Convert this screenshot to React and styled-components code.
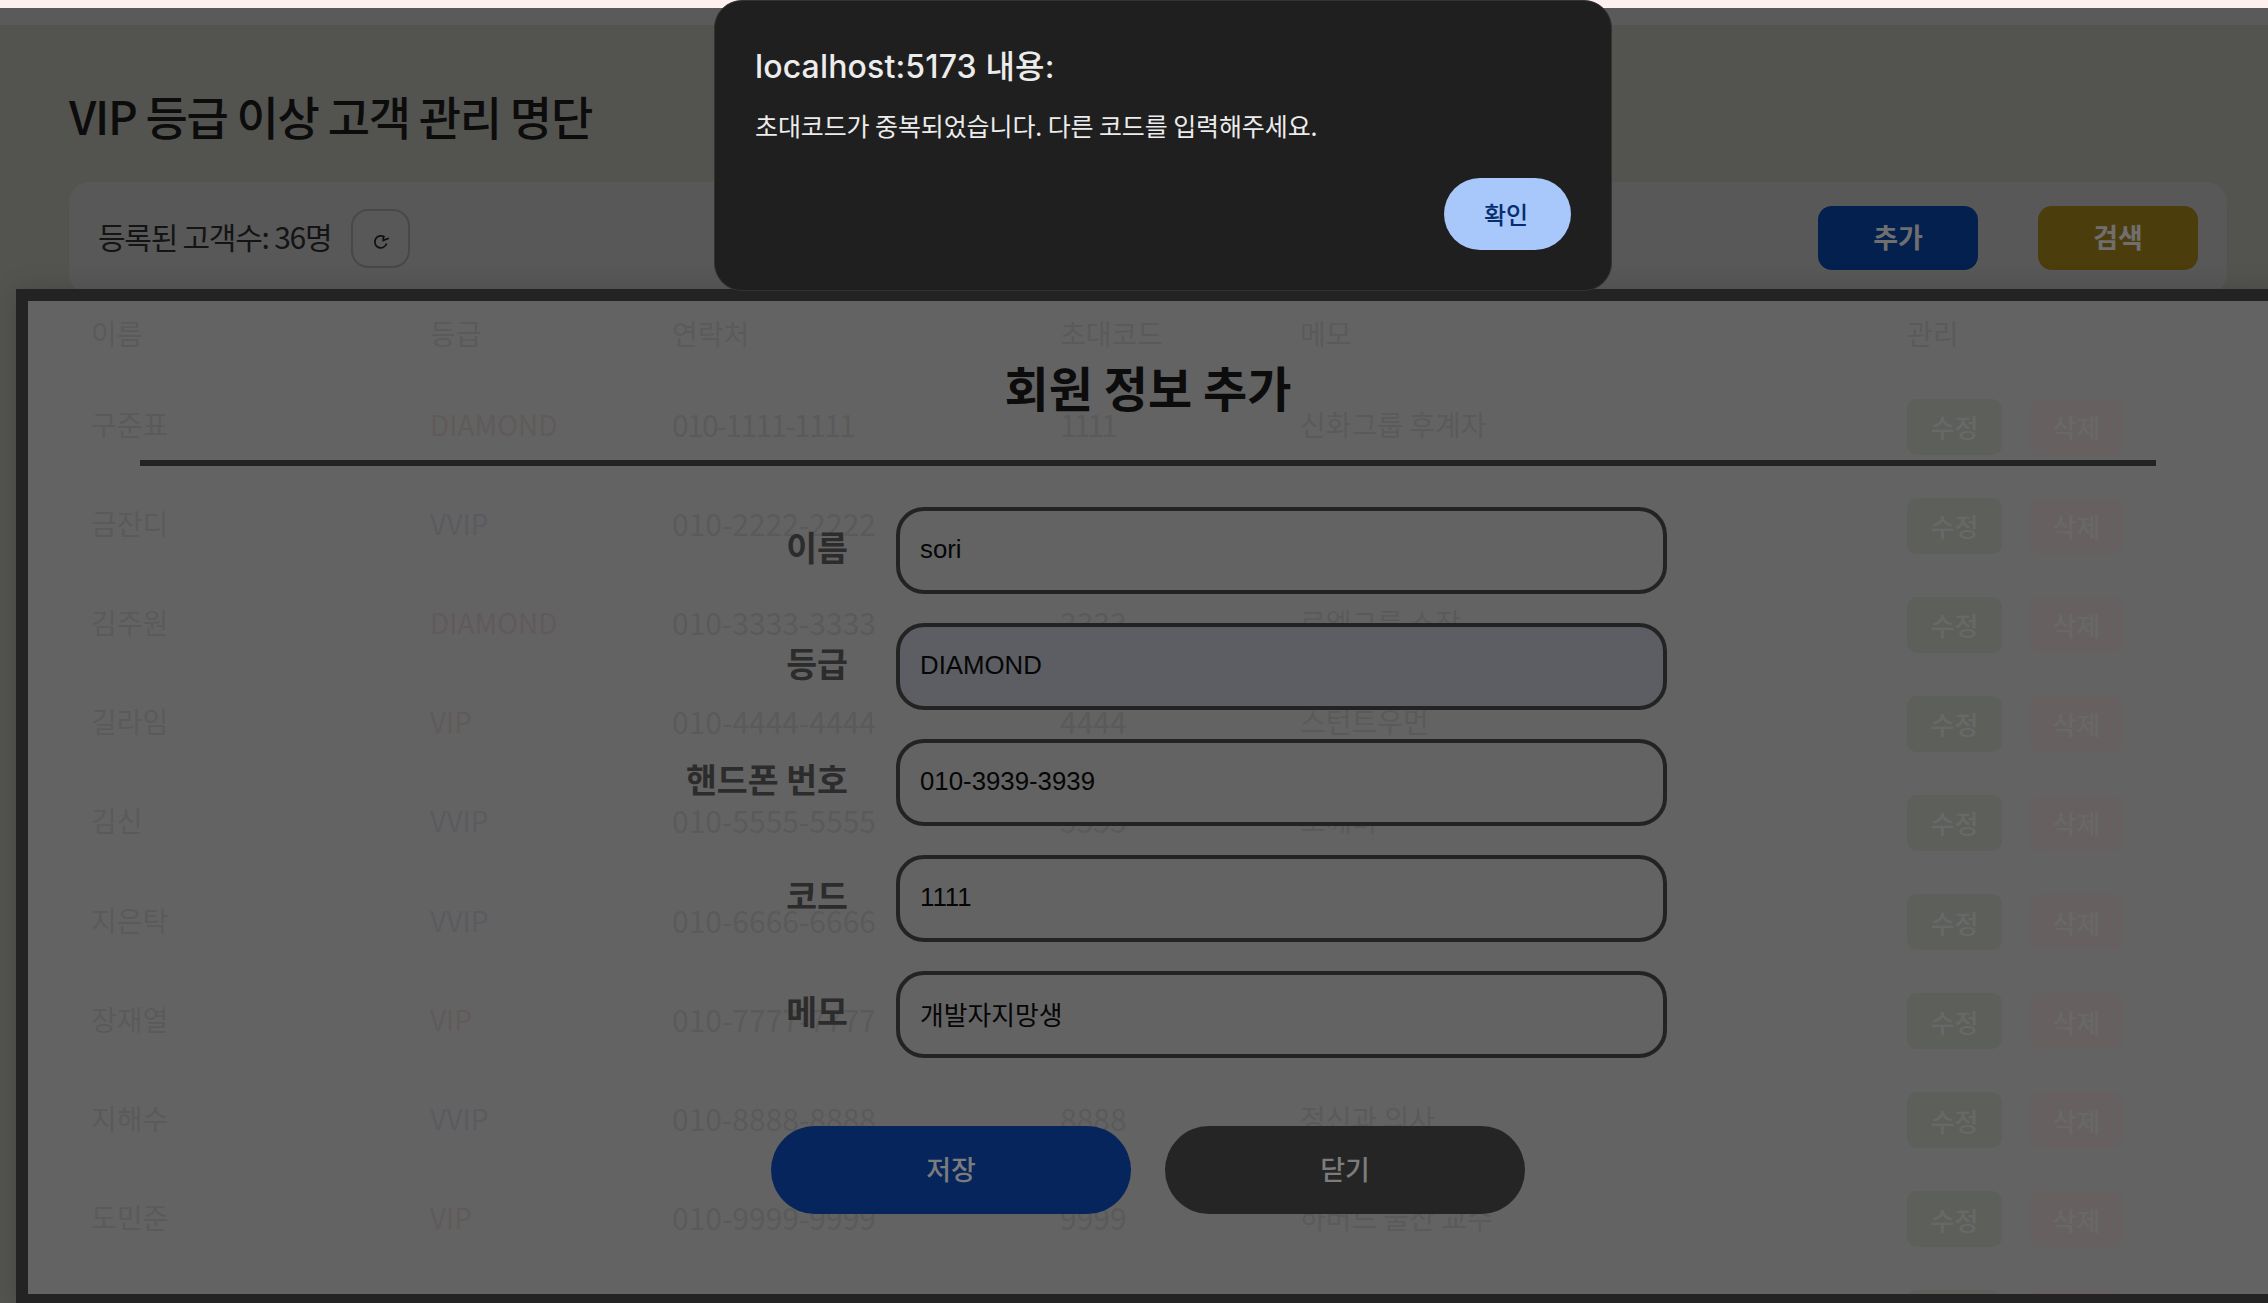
import React from "react";
import styled, { createGlobalStyle } from "styled-components";

const Global = createGlobalStyle`
  html, body { margin: 0; padding: 0; width: 2268px; height: 1303px; overflow: hidden; background: #535350; }
  * { box-sizing: border-box; }
  body { font-family: "Noto Sans CJK KR", "Noto Sans", sans-serif; }
`;

const Screen = styled.div`
  position: relative;
  width: 2268px;
  height: 1303px;
  overflow: hidden;
  background: #535350;
`;
const TopStrip = styled.div`
  height: 8px;
  background: #fff0f0;
`;
const TopBand = styled.div`
  height: 17px;
  background: #5a5a5a;
`;
const Main = styled.main`
  padding: 0 41px 0 69px;
`;
const PageTitle = styled.h1`
  margin: 0;
  height: 157px;
  padding-top: 62px;
  font-size: 46px;
  line-height: 56px;
  font-weight: 500;
  letter-spacing: -1.3px;
  color: #0c0c0c;
`;
const Toolbar = styled.div`
  height: 112px;
  padding: 24px 29px;
  display: flex;
  align-items: flex-start;
  justify-content: space-between;
  background: #585858;
  border-radius: 20px;
`;
const ToolLeft = styled.div`
  display: flex;
  align-items: center;
  gap: 20px;
  height: 64px;
`;
const Count = styled.span`
  margin-top: -5px;
  font-size: 30px;
  letter-spacing: -1.25px;
  color: #141414;
`;
const RefreshButton = styled.button`
  width: 59px;
  height: 59px;
  padding: 8px 0 0;
  display: flex;
  align-items: center;
  justify-content: center;
  background: transparent;
  border: 2px solid #484848;
  border-radius: 17px;
`;
const ToolRight = styled.div`
  display: flex;
  gap: 60px;
`;
const ToolButton = styled.button`
  width: 160px;
  height: 64px;
  padding: 0 0 3px;
  border: 0;
  border-radius: 14px;
  background: ${(p) => p.$bg};
  color: #6f6f6f;
  font: 600 27px "Noto Sans CJK KR", sans-serif;
`;
const Table = styled.div`
  display: grid;
  grid-template-columns: 339px 242px 388px 240px 607px 1fr;
  grid-template-rows: 80.5px;
  grid-auto-rows: 99.1px;
  padding-left: 22px;
`;
const Cell = styled.div`
  display: flex;
  align-items: center;
  font-size: ${(p) => p.$size || 28}px;
  letter-spacing: ${(p) => p.$track || 0}px;
  color: ${(p) => p.$color || "#0a0a0a"};
`;
const HeadCell = styled(Cell)`
  padding-bottom: 2px;
`;
const Actions = styled.div`
  display: flex;
  align-items: center;
  gap: 28px;
  padding-top: 5px;
`;
const ActionButton = styled.button`
  width: ${(p) => p.$w}px;
  height: 56px;
  padding: 0;
  border: 0;
  border-radius: 10px;
  background: ${(p) => p.$bg};
  color: #7e7e7e;
  font: 500 26px "Noto Sans CJK KR", sans-serif;
`;
const Modal = styled.section`
  position: absolute;
  top: 289px;
  left: 16px;
  width: 2264px;
  height: 1017px;
  border: 12px solid #232323;
  background: rgba(101, 101, 101, 0.88);
  box-shadow: 0 0 24px rgba(0, 0, 0, 0.15);
  padding-top: 50px;
`;
const ModalTitle = styled.h2`
  margin: 0;
  height: 109px;
  font-size: 48px;
  line-height: 70px;
  font-weight: 700;
  text-align: center;
  color: #0c0c0c;
`;
const Divider = styled.hr`
  margin: 0 112px;
  height: 6px;
  border: 0;
  background: #232323;
`;
const Form = styled.div`
  margin-top: 41px;
  display: grid;
  grid-template-columns: 219px 771px;
  justify-content: center;
  column-gap: 48px;
  row-gap: 29px;
  align-items: center;
`;
const Label = styled.label`
  margin-top: -9px;
  text-align: right;
  font-size: 33.6px;
  font-weight: 700;
  color: #2c2c2c;
  white-space: nowrap;
`;
const Field = styled.input`
  width: 771px;
  height: 87px;
  padding: 0 20px 3px;
  border: 4px solid #232323;
  border-radius: 28px;
  outline: none;
  background: ${(p) => (p.$select ? "#5c5e63" : "#636363")};
  color: #060606;
  font: 25.8px "Liberation Sans", "Noto Sans CJK KR", sans-serif;
`;
const ModalActions = styled.div`
  margin-top: 68px;
  display: flex;
  justify-content: center;
  gap: 34px;
`;
const PillButton = styled.button`
  width: 360px;
  height: 88px;
  padding: 0 0 4px;
  border: 0;
  border-radius: 44px;
  background: ${(p) => p.$bg};
  color: #7c7c7c;
  font: 500 27px "Noto Sans CJK KR", sans-serif;
`;
const Alert = styled.div`
  position: absolute;
  top: 0;
  left: 714px;
  width: 898px;
  height: 291px;
  padding: 44px 40px 40px 40px;
  display: flex;
  flex-direction: column;
  background: #1f1f1f;
  border: 1px solid #333;
  border-radius: 28px;
`;
const AlertTitle = styled.div`
  font: 500 32px/44px "Inter", "Noto Sans CJK KR", sans-serif;
  letter-spacing: 0.15px;
  color: #ececec;
`;
const AlertBody = styled.div`
  margin-top: 18px;
  font: 400 25px/36px "Noto Sans CJK KR", sans-serif;
  letter-spacing: -0.1px;
  color: #ececec;
`;
const AlertFoot = styled.div`
  margin-top: auto;
  display: flex;
  justify-content: flex-end;
`;
const AlertOk = styled.button`
  width: 127px;
  height: 72px;
  padding: 0 3px 2px 0;
  border: 0;
  border-radius: 36px;
  background: #a8c7fa;
  color: #062e6f;
  font: 500 24px "Noto Sans CJK KR", sans-serif;
`;

const GRADE = { DIAMOND: "#3a0a0a", VVIP: "#0a0a3a", VIP: "#3a0808" };
const rows = [
  ["구준표", "DIAMOND", "010-1111-1111", "1111", "신화그룹 후계자", -1.7, -2.9],
  ["금잔디", "VVIP", "010-2222-2222", "2222", ""],
  ["김주원", "DIAMOND", "010-3333-3333", "3333", "로엘그룹 소장"],
  ["길라임", "VIP", "010-4444-4444", "4444", "스턴트우먼"],
  ["김신", "VVIP", "010-5555-5555", "5555", "도깨비"],
  ["지은탁", "VVIP", "010-6666-6666", "6666", ""],
  ["장재열", "VIP", "010-7777-7777", "7777", ""],
  ["지해수", "VVIP", "010-8888-8888", "8888", "정신과 의사"],
  ["도민준", "VIP", "010-9999-9999", "9999", "하버드 물산 교수"],
];
const fields = [
  ["이름", "sori"],
  ["등급", "DIAMOND", true],
  ["핸드폰 번호", "010-3939-3939"],
  ["코드", "1111"],
  ["메모", "개발자지망생"],
];

const RefreshIcon = () => (
  <svg width="20" height="20" viewBox="0 0 20 20" fill="none" stroke="#101010" strokeWidth="1.7">
    <path d="M15.6 11.5A6 6 0 1 1 13.6 5.2" />
    <path d="M17.8 6.2 L12.2 8.4 L12.4 3.8" />
  </svg>
);

const RowActions = ({ labelled = true }) => (
  <Actions>
    <ActionButton $w={95} $bg="#1a3308">{labelled && "수정"}</ActionButton>
    <ActionButton $w={93} $bg="#6a3a38">{labelled && "삭제"}</ActionButton>
  </Actions>
);

export default function App() {
  return (
    <Screen>
      <Global />
      <TopStrip />
      <TopBand />
      <Main>
        <PageTitle>VIP 등급 이상 고객 관리 명단</PageTitle>
        <Toolbar>
          <ToolLeft>
            <Count>등록된 고객수: 36명</Count>
            <RefreshButton aria-label="새로고침"><RefreshIcon /></RefreshButton>
          </ToolLeft>
          <ToolRight>
            <ToolButton $bg="#03204f">추가</ToolButton>
            <ToolButton $bg="#4c3d0d">검색</ToolButton>
          </ToolRight>
        </Toolbar>
        <Table>
          {["이름", "등급", "연락처", "초대코드", "메모", "관리"].map((h) => (
            <HeadCell key={h}>{h}</HeadCell>
          ))}
          {rows.map((r) => (
            <React.Fragment key={r[0]}>
              <Cell>{r[0]}</Cell>
              <Cell $color={GRADE[r[1]]}>{r[1]}</Cell>
              <Cell $size={30} $track={r[5]}>{r[2]}</Cell>
              <Cell $size={30} $track={r[6]}>{r[3]}</Cell>
              <Cell>{r[4]}</Cell>
              <RowActions />
            </React.Fragment>
          ))}
          <Cell /><Cell /><Cell /><Cell /><Cell />
          <RowActions labelled={false} />
        </Table>
      </Main>
      <Modal>
        <ModalTitle>회원 정보 추가</ModalTitle>
        <Divider />
        <Form>
          {fields.map(([label, value, select]) => (
            <React.Fragment key={label}>
              <Label>{label}</Label>
              <Field defaultValue={value} readOnly $select={select} />
            </React.Fragment>
          ))}
        </Form>
        <ModalActions>
          <PillButton $bg="#06255c">저장</PillButton>
          <PillButton $bg="#252525">닫기</PillButton>
        </ModalActions>
      </Modal>
      <Alert>
        <AlertTitle>localhost:5173 내용:</AlertTitle>
        <AlertBody>초대코드가 중복되었습니다. 다른 코드를 입력해주세요.</AlertBody>
        <AlertFoot>
          <AlertOk>확인</AlertOk>
        </AlertFoot>
      </Alert>
    </Screen>
  );
}
